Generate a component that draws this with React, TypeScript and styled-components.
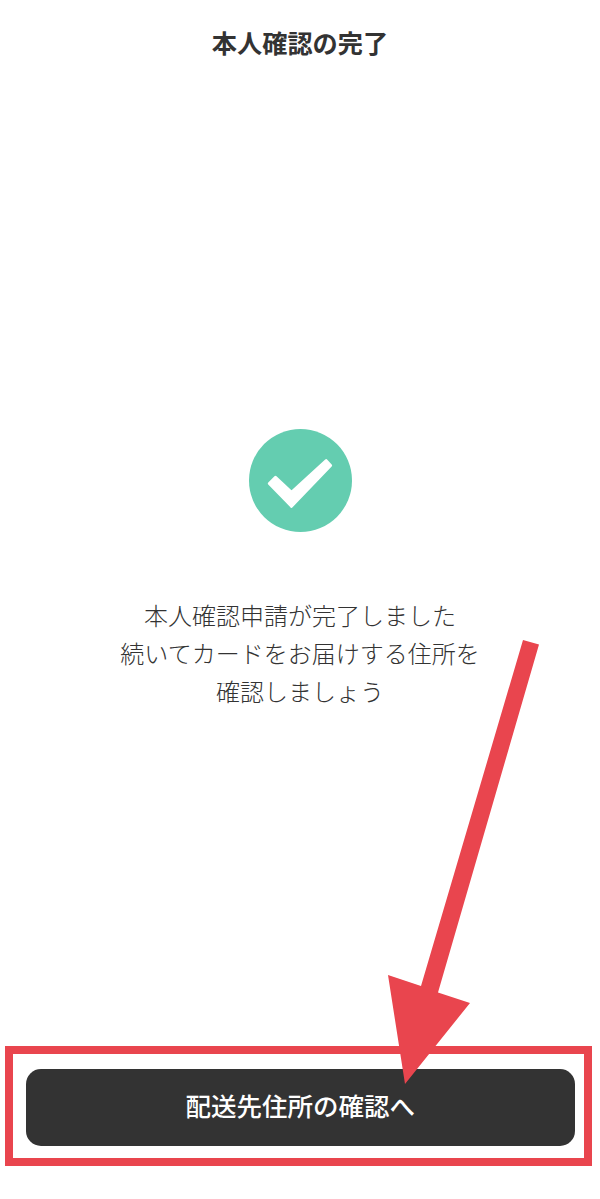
import React from "react";
import styled, { createGlobalStyle } from "styled-components";

const Global = createGlobalStyle`
  html, body { margin: 0; padding: 0; background: #fff; }
  body { font-family: "Noto Sans CJK JP", "Noto Sans", sans-serif; }
  * { box-sizing: border-box; }
`;

const Page = styled.div`
  position: relative;
  width: 600px;
  height: 1199px;
  display: flex;
  flex-direction: column;
  background: #fff;
  overflow: hidden;
`;

const Title = styled.h1`
  margin: 0;
  padding-top: 23px;
  height: 62px;
  font-size: 25.2px;
  line-height: 38px;
  font-weight: 700;
  color: #333;
  text-align: center;
`;

const Main = styled.main`
  padding-top: 367px;
  flex: 1;
  display: flex;
  flex-direction: column;
  align-items: center;
`;

const Badge = styled.svg`
  display: block;
  width: 103px;
  height: 103px;
  margin-left: 1px;
`;

const Message = styled.p`
  margin: 64px 0 0;
  font-size: 24px;
  line-height: 38px;
  font-weight: 300;
  color: #333;
  text-align: center;
`;

const Frame = styled.div`
  margin: 0 8px 33px 5px;
  height: 120px;
  padding: 15px 9px 0 12.5px;
  border: 8px solid #e9454e;
`;

const ActionButton = styled.button`
  display: block;
  width: 100%;
  height: 77px;
  border: 0;
  border-radius: 15px;
  background: #333;
  color: #fff;
  font: 500 25.5px/71px "Noto Sans CJK JP", sans-serif;
  text-align: center;
  padding: 0 0 6px;
`;

const Arrow = styled.svg`
  position: absolute;
  inset: 0;
  width: 600px;
  height: 1199px;
  pointer-events: none;
`;

export default function App() {
  return (
    <Page>
      <Global />
      <Title>本人確認の完了</Title>
      <Main>
        <Badge viewBox="0 0 103 103" aria-hidden="true">
          <circle cx="51.5" cy="51.5" r="51.5" fill="#64cdb0" />
          <path
            d="M20.3 54.5 L26.5 48.4 L42.5 63.4 L77.2 31.7 L81.6 36.5 L42.5 77.3 Z"
            fill="#fff"
            stroke="#fff"
            strokeWidth="3"
            strokeLinejoin="round"
          />
        </Badge>
        <Message>
          本人確認申請が完了しました
          <br />
          続いてカードをお届けする住所を
          <br />
          確認しましょう
        </Message>
      </Main>
      <Frame>
        <ActionButton>配送先住所の確認へ</ActionButton>
      </Frame>
      <Arrow viewBox="0 0 600 1199" aria-hidden="true">
        <path
          d="M523 640 L539 644.5 L438 992.5 L470 1003 L405 1084 L388 975 L421 986 Z"
          fill="#e9454e"
        />
      </Arrow>
    </Page>
  );
}
